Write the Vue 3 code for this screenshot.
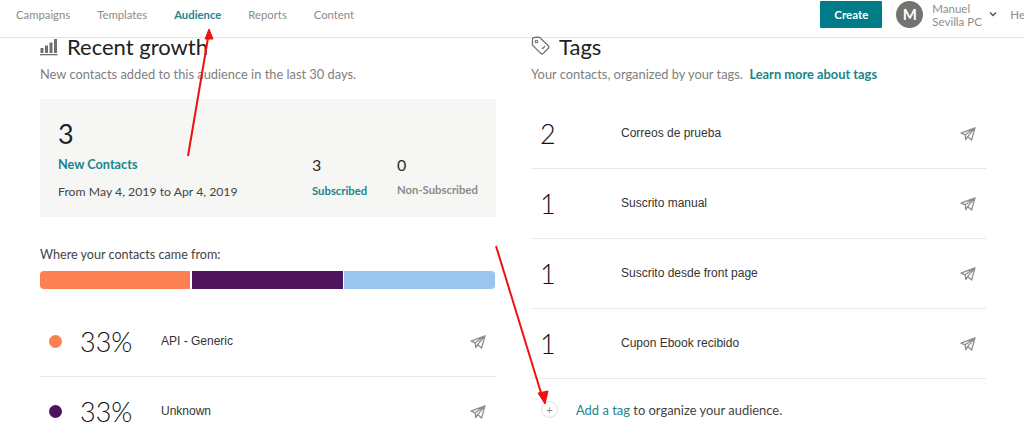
<script setup>
const nav = [
  { label: 'Campaigns' },
  { label: 'Templates' },
  { label: 'Audience', active: true },
  { label: 'Reports' },
  { label: 'Content' }
]
const sources = [
  { pct: '33%', label: 'API - Generic', color: '#fd8053' },
  { pct: '33%', label: 'Unknown', color: '#4e145b' }
]
const tags = [
  { n: 2, label: 'Correos de prueba' },
  { n: 1, label: 'Suscrito manual' },
  { n: 1, label: 'Suscrito desde front page' },
  { n: 1, label: 'Cupon Ebook recibido' }
]
</script>

<template>
  <div class="page">
    <header class="top">
      <nav class="nav">
        <a v-for="n in nav" :key="n.label" :class="{ active: n.active }">{{ n.label }}</a>
      </nav>
      <div class="account">
        <button class="create">Create</button>
        <span class="avatar">M</span>
        <span class="name">Manuel<br />Sevilla PC</span>
        <svg class="chev" width="8" height="6" viewBox="0 0 8 6"><path d="M1 1.5 4 4.5 7 1.5" fill="none" stroke="#555" stroke-width="1.4" /></svg>
        <span class="help">He</span>
      </div>
    </header>

    <main class="cols">
      <section class="col left">
        <h2 class="title">
          <svg class="t-icon" width="18" height="18" viewBox="0 0 18 18">
            <g fill="#6f6f6f"><rect x="0.5" y="10" width="3" height="5" /><rect x="5" y="7.5" width="3" height="7.5" /><rect x="9.5" y="4.5" width="3" height="10.5" /><rect x="14" y="1" width="3" height="14" /><rect x="0" y="16" width="17.5" height="1.3" /></g>
          </svg>
          Recent growth
        </h2>
        <p class="sub">New contacts added to this audience in the last 30 days.</p>

        <div class="stats">
          <div class="main-stat">
            <div class="big">3</div>
            <div class="link strong">New Contacts</div>
            <div class="range">From May 4, 2019 to Apr 4, 2019</div>
          </div>
          <div class="mini first">
            <div class="num">3</div>
            <div class="link small">Subscribed</div>
          </div>
          <div class="mini">
            <div class="num">0</div>
            <div class="muted small">Non-Subscribed</div>
          </div>
        </div>

        <p class="where">Where your contacts came from:</p>
        <div class="bar">
          <span class="orange"></span><span class="purple"></span><span class="blue"></span>
        </div>

        <div class="src-list">
          <div v-for="s in sources" :key="s.label + s.color" class="row src">
            <span class="dot" :style="{ background: s.color }"></span>
            <span class="pct">{{ s.pct }}</span>
            <span class="label">{{ s.label }}</span>
            <svg class="send" width="16" height="14" viewBox="0 0 16 14"><path d="M1 6.2 15 .8 11.6 13 7.6 9.6 5.8 12.6 5.2 7.8ZM5.2 7.8 15 .8 7.6 9.6" fill="none" stroke="#8e8e8e" stroke-width="1.3" stroke-linejoin="round" /></svg>
          </div>
        </div>
      </section>

      <section class="col right">
        <h2 class="title">
          <svg class="t-icon tag" width="20" height="20" viewBox="0 0 20 20">
            <path d="M1.5 3.2Q1.5 1.5 3.2 1.5L7.5 1.2Q8.5 1.2 9.2 1.9L17.5 10Q18.5 11 17.5 12L12 17.6Q11 18.5 10 17.6L2 9.6Q1.4 9 1.4 8Z" fill="none" stroke="#6f6f6f" stroke-width="1.3" stroke-linejoin="round" />
            <circle cx="5.5" cy="5.5" r="1.3" fill="none" stroke="#6f6f6f" stroke-width="1.1" />
            <path d="M11 13 14 10.2" stroke="#6f6f6f" stroke-width="1.3" />
          </svg>
          Tags
        </h2>
        <p class="sub">Your contacts, organized by your tags. &nbsp;<a class="link strong">Learn more about tags</a></p>

        <div class="tag-list">
          <div v-for="t in tags" :key="t.label" class="row tagrow">
            <span class="count">{{ t.n }}</span>
            <span class="label">{{ t.label }}</span>
            <svg class="send" width="16" height="14" viewBox="0 0 16 14"><path d="M1 6.2 15 .8 11.6 13 7.6 9.6 5.8 12.6 5.2 7.8ZM5.2 7.8 15 .8 7.6 9.6" fill="none" stroke="#8e8e8e" stroke-width="1.3" stroke-linejoin="round" /></svg>
          </div>
        </div>
        <div class="add">
          <span class="plus">+</span>
          <span class="add-text"><a class="link">Add a tag</a> to organize your audience.</span>
        </div>
      </section>
    </main>

    <svg class="arrows" width="1024" height="443" viewBox="0 0 1024 443">
      <g stroke="#f01010" stroke-width="2" fill="#f01010">
        <path d="M188 156 208 38" />
        <path d="M209 29 213 39 205 39Z" stroke-width="1" />
        <path d="M496 246 542 396" />
        <path d="M545 404 538 393 548 391Z" stroke-width="1" />
      </g>
    </svg>
  </div>
</template>

<style>
html, body { margin: 0; background: #fff; }
</style>

<style scoped>
.page {
  position: relative;
  width: 1024px;
  height: 443px;
  overflow: hidden;
  background: #fff;
  font-family: Lato, "Open Sans", sans-serif;
  color: #2b2b2b;
}
.top {
  display: flex;
  justify-content: space-between;
  align-items: center;
  height: 37px;
  border-bottom: 1px solid #e4e4e2;
  padding-left: 16px;
}
.nav { display: flex; gap: 27px; font-size: 11.3px; color: #8b8b88; padding-bottom: 8px; }
.nav a { white-space: nowrap; }
.nav .active { color: #23858c; font-weight: 700; }
.account { display: flex; align-items: center; height: 28px; margin-top: -9px; margin-right: -1px; white-space: nowrap; }
.create {
  width: 62px; height: 27px; margin-right: 14px; border: 0; border-radius: 1px;
  background: #007c89; color: #fff; font: 700 11.5px Lato, sans-serif; padding: 0;
}
.avatar {
  width: 27px; height: 27px; border-radius: 50%; background: #737370; color: #fff;
  display: flex; align-items: center; justify-content: center; font-size: 15px; font-weight: 700;
}
.name { margin-left: 9px; width: 54px; padding-top: 2px; font-size: 11.5px; line-height: 13px; color: #8e8e8b; }
.chev { margin-left: 3px; }
.help { margin-left: 13px; font-size: 11.5px; color: #8b8b88; }

.cols { display: flex; padding-left: 40px; }
.col.left { width: 456px; }
.col.right { width: 455px; margin-left: 35px; }
.title {
  display: flex; align-items: center; margin: -2px 0 0; height: 20px;
  font-size: 22px; font-weight: 400; color: #222;
}
.t-icon { margin-right: 9px; margin-top: 2px; }
.t-icon.tag { margin-right: 8px; margin-top: 0; }
.sub { margin: 10px 0 0; font-size: 12.85px; line-height: 16px; color: #80807d; white-space: nowrap; }
.link { color: #1c848c; }
.strong { font-weight: 700; }
.stats {
  display: flex; box-sizing: border-box; height: 118px; margin-top: 17px;
  padding: 21px 18px 0; background: #f6f6f4;
}
.main-stat { width: 254px; }
.big { font-size: 27px; line-height: 28px; color: #222; }
.main-stat .link { font-size: 12.7px; line-height: 16px; margin-top: 8px; }
.range { margin-top: 12px; font-size: 12.25px; line-height: 16px; color: #444; }
.mini { padding-top: 36px; }
.mini.first { width: 85px; }
.num { font-size: 16px; line-height: 18px; color: #2b2b2b; }
.small { font-size: 11.3px; line-height: 14px; margin-top: 10px; white-space: nowrap; }
.mini .link { font-weight: 700; }
.mini .muted { color: #8b8b88; font-weight: 700; margin-top: 9px; }
.where { margin: 30px 0 0; font-size: 12.6px; line-height: 16px; color: #444; }
.bar { display: grid; grid-template-columns: 150px 151px 1fr; gap: 1.5px; height: 18px; margin-top: 8px; margin-right: 1px; border-radius: 4px; overflow: hidden; }
.orange { background: #fd8053; }
.purple { background: #4e145b; }
.blue { background: #9ac5ef; }
.row { display: flex; align-items: center; box-sizing: border-box; border-bottom: 1px solid #e8e8e6; }
.src-list { margin-top: 18px; }
.src { height: 70px; }
.src .label, .tagrow .label { margin-bottom: 2px; }
.dot { width: 13px; height: 13px; border-radius: 50%; margin-left: 9px; }
.pct { width: 81px; margin-left: 18px; font-size: 27px; font-weight: 300; color: #111; }
.label { font-family: "Liberation Sans", sans-serif; font-size: 12px; color: #333; }
.send { margin-left: auto; margin-right: 10px; }
.tag-list { margin-top: 17px; }
.tagrow { height: 70px; }
.count { width: 90px; padding-left: 9px; box-sizing: border-box; font-size: 27px; font-weight: 300; color: #111; }
.add { display: flex; align-items: center; height: 61px; }
.plus {
  width: 15px; height: 15px; margin-left: 10px; border: 1px solid #ddd; border-radius: 50%;
  display: flex; align-items: center; justify-content: center; font-size: 11px; color: #888;
}
.add-text { margin-left: 18px; font-size: 12.95px; color: #444; }
.arrows { position: absolute; left: 0; top: 0; pointer-events: none; }
</style>
